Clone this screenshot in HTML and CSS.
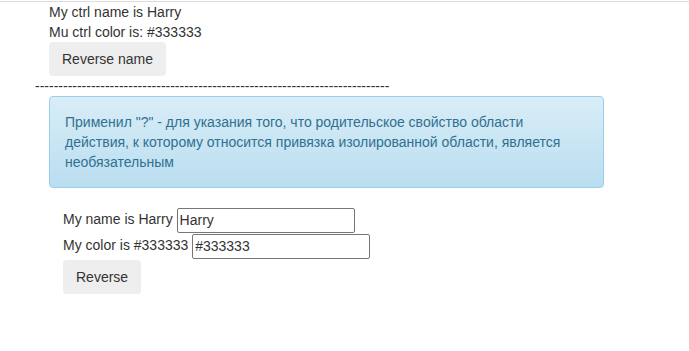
FILE: index.html
```html
<!DOCTYPE html>
<html lang="en">
<head>
    <meta charset="UTF-8">
    <meta name="viewport" content="width=device-width, initial-scale=1.0">
    <title>Isolated scope demo</title>
    <link rel="stylesheet" href="styles.css">
</head>
<body>
    <div class="top-rule"></div>
    <div class="page">
        <div class="ctrl-block">
            <div>My ctrl name is Harry</div>
            <div>Mu ctrl color is: #333333</div>
            <button class="btn">Reverse name</button>
        </div>

        <div class="dashes">----------------------------------------------------------------------------</div>

        <div class="alert alert-info">
            Применил "?" - для указания того, что родительское свойство области действия, к которому относится привязка изолированной области, является необязательным
        </div>

        <div class="form-block">
            <div class="row">My name is Harry <input class="field" type="text" value="Harry"></div>
            <div class="row">My color is #333333 <input class="field" type="text" value="#333333"></div>
            <button class="btn">Reverse</button>
        </div>
    </div>
</body>
</html>
```

FILE: styles.css
```css
body {
    margin: 0;
    font-family: "Liberation Sans", Arial, sans-serif;
    font-size: 14px;
    line-height: 20px;
    color: #333;
    background: #fff;
}
.top-rule {
    height: 1px;
    margin-top: 1px;
    background: #dddddd;
}
.page {
    padding-left: 35px;
}
.ctrl-block {
    padding-left: 14px;
}
.btn {
    display: inline-block;
    font-family: inherit;
    font-size: 14px;
    line-height: 20px;
    color: #333;
    background: #eeeeee;
    border: 1px solid transparent;
    border-radius: 4px;
    padding: 6px 12px;
    cursor: pointer;
}
.dashes {
    line-height: 20px;
}
.alert {
    margin-left: 14px;
    width: 523px;
    padding: 15px;
    border-radius: 4px;
    margin-bottom: 18px;
}
.alert-info {
    color: #31708f;
    border: 1px solid #9acfea;
    background-image: linear-gradient(to bottom, #d9edf7 0, #b9def0 100%);
}
.form-block {
    padding-left: 28px;
}
.row {
    height: 26px;
    line-height: 26px;
}
.field {
    box-sizing: border-box;
    width: 178px;
    height: 25px;
    padding: 1px 2px;
    font-family: inherit;
    font-size: 14px;
    color: #333;
    border: 1px solid #767676;
    border-radius: 2px;
    vertical-align: middle;
}
.form-block .btn {
    margin-top: 2px;
}
```
